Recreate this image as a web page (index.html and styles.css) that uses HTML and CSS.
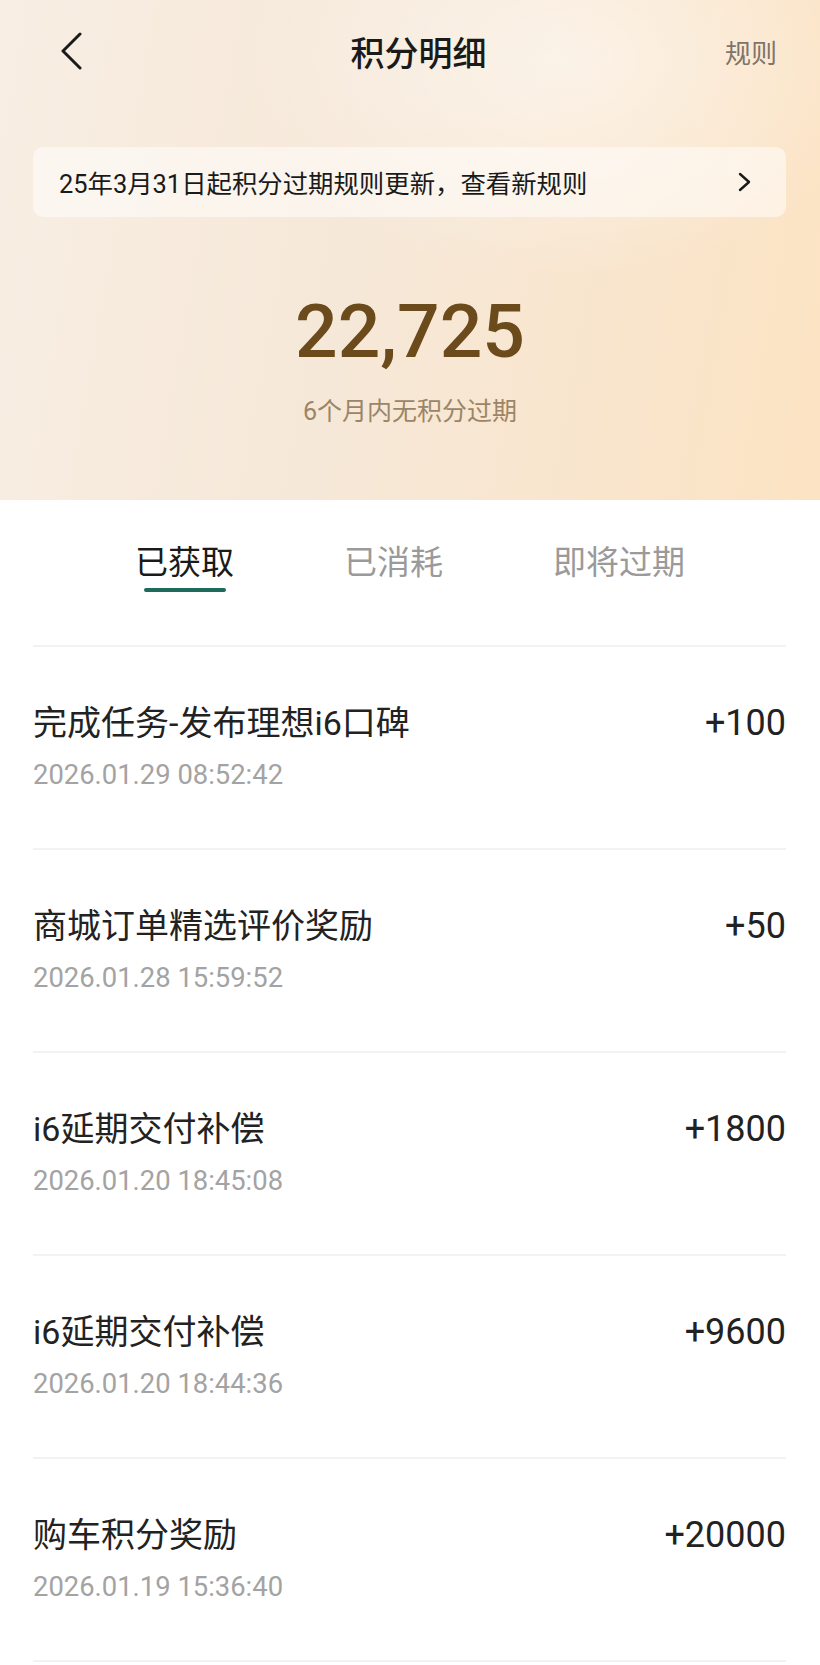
FILE: index.html
```html
<!DOCTYPE html>
<html lang="zh-CN">
<head>
    <meta charset="UTF-8">
    <title>积分明细</title>
    <meta name="viewport" content="width=device-width, initial-scale=1.0">
    <link rel="stylesheet" href="styles.css">
</head>
<body>

<div class="header">
    <div class="nav">
        <a class="back" href="#">
            <svg width="24" height="38" viewBox="0 0 24 38"><path d="M20 2 L3 19 L20 36" fill="none" stroke="#1a1a1a" stroke-width="3" stroke-linecap="round" stroke-linejoin="round"/></svg>
        </a>
        <div class="nav-title">积分明细</div>
        <a class="nav-rule" href="#">规则</a>
    </div>

    <a class="notice" href="#">
        <span>25年3月31日起积分过期规则更新，查看新规则</span>
        <svg width="14" height="20" viewBox="0 0 14 20"><path d="M2 2 L11 10 L2 18" fill="none" stroke="#1a1a1a" stroke-width="2.4" stroke-linecap="round" stroke-linejoin="round"/></svg>
    </a>

    <div class="balance">
        <div class="balance-num">22,725</div>
        <div class="balance-tip">6个月内无积分过期</div>
    </div>
</div>

<div class="tabs">
    <div class="tab active">已获取</div>
    <div class="tab">已消耗</div>
    <div class="tab">即将过期</div>
</div>

<div class="list">
    <div class="row">
        <div class="row-info">
            <div class="row-title">完成任务-发布理想i6口碑</div>
            <div class="row-time">2026.01.29 08:52:42</div>
        </div>
        <div class="row-amount">+100</div>
    </div>
    <div class="row">
        <div class="row-info">
            <div class="row-title">商城订单精选评价奖励</div>
            <div class="row-time">2026.01.28 15:59:52</div>
        </div>
        <div class="row-amount">+50</div>
    </div>
    <div class="row">
        <div class="row-info">
            <div class="row-title">i6延期交付补偿</div>
            <div class="row-time">2026.01.20 18:45:08</div>
        </div>
        <div class="row-amount">+1800</div>
    </div>
    <div class="row">
        <div class="row-info">
            <div class="row-title">i6延期交付补偿</div>
            <div class="row-time">2026.01.20 18:44:36</div>
        </div>
        <div class="row-amount">+9600</div>
    </div>
    <div class="row">
        <div class="row-info">
            <div class="row-title">购车积分奖励</div>
            <div class="row-time">2026.01.19 15:36:40</div>
        </div>
        <div class="row-amount">+20000</div>
    </div>
</div>

</body>
</html>
```

FILE: styles.css
```css
body {
    font-family: Roboto, "Noto Sans CJK SC", sans-serif;
    background: #fff;
    margin: 0;
    padding: 0;
    color: #1a1a1a;
}

a {
    color: inherit;
    text-decoration: none;
}

/* top area */
.header {
    height: 500px;
    box-sizing: border-box;
    background:
        radial-gradient(ellipse 320px 220px at 560px 60px, rgba(255, 255, 255, 0.5), rgba(255, 255, 255, 0)),
        linear-gradient(100deg, #f8eee3 0%, #f6e8d8 45%, #fce3c3 100%);
    overflow: hidden;
}

.nav {
    display: grid;
    grid-template-columns: 1fr auto 1fr;
    align-items: center;
    height: 102px;
    padding: 0 43px 0 60px;
}

.back {
    display: flex;
    align-items: center;
}

.nav-title {
    font-family: "Noto Sans CJK SC", sans-serif;
    font-size: 34px;
    font-weight: 500;
    color: #1a1a1a;
}

.nav-rule {
    justify-self: end;
    font-family: "Noto Sans CJK SC", sans-serif;
    font-size: 26px;
    color: #7d746b;
}

.notice {
    display: flex;
    justify-content: space-between;
    align-items: center;
    height: 70px;
    margin: 45px 34px 0 33px;
    padding: 0 34px 0 26px;
    border-radius: 10px;
    background: rgba(255, 255, 255, 0.5);
    font-size: 25.4px;
    color: #1a1a1a;
}

.balance {
    text-align: center;
    margin-top: 70px;
}

.balance-num {
    font-size: 75px;
    font-weight: 500;
    line-height: 88px;
    color: #6b4a1c;
}

.balance-tip {
    margin-top: 19px;
    font-size: 25px;
    line-height: 36px;
    color: #9c8566;
}

/* tabs */
.tabs {
    display: flex;
    justify-content: center;
    gap: 110px;
    padding-top: 37px;
    height: 145px;
    box-sizing: border-box;
}

.tab {
    font-family: "Noto Sans CJK SC", sans-serif;
    font-size: 33px;
    line-height: 46px;
    color: #9a9a9a;
}

.tab.active {
    color: #1a1a1a;
}

.tab.active::after {
    content: "";
    display: block;
    width: 82px;
    height: 4px;
    margin: 5px auto 0;
    border-radius: 2px;
    background: #1e6b5b;
}

/* records */
.list {
    margin: 0 34px 0 33px;
}

.row {
    display: flex;
    justify-content: space-between;
    align-items: flex-start;
    padding: 54px 0 55px;
    border-top: 2px solid #f2f2f2;
}

.row:last-child {
    border-bottom: 2px solid #f2f2f2;
}

.row-title {
    font-size: 34px;
    line-height: 44px;
    color: #222;
}

.row-time {
    margin-top: 12px;
    font-size: 27.4px;
    line-height: 36px;
    color: #a3a3a3;
}

.row-amount {
    font-size: 36px;
    line-height: 44px;
    color: #222;
}
```
